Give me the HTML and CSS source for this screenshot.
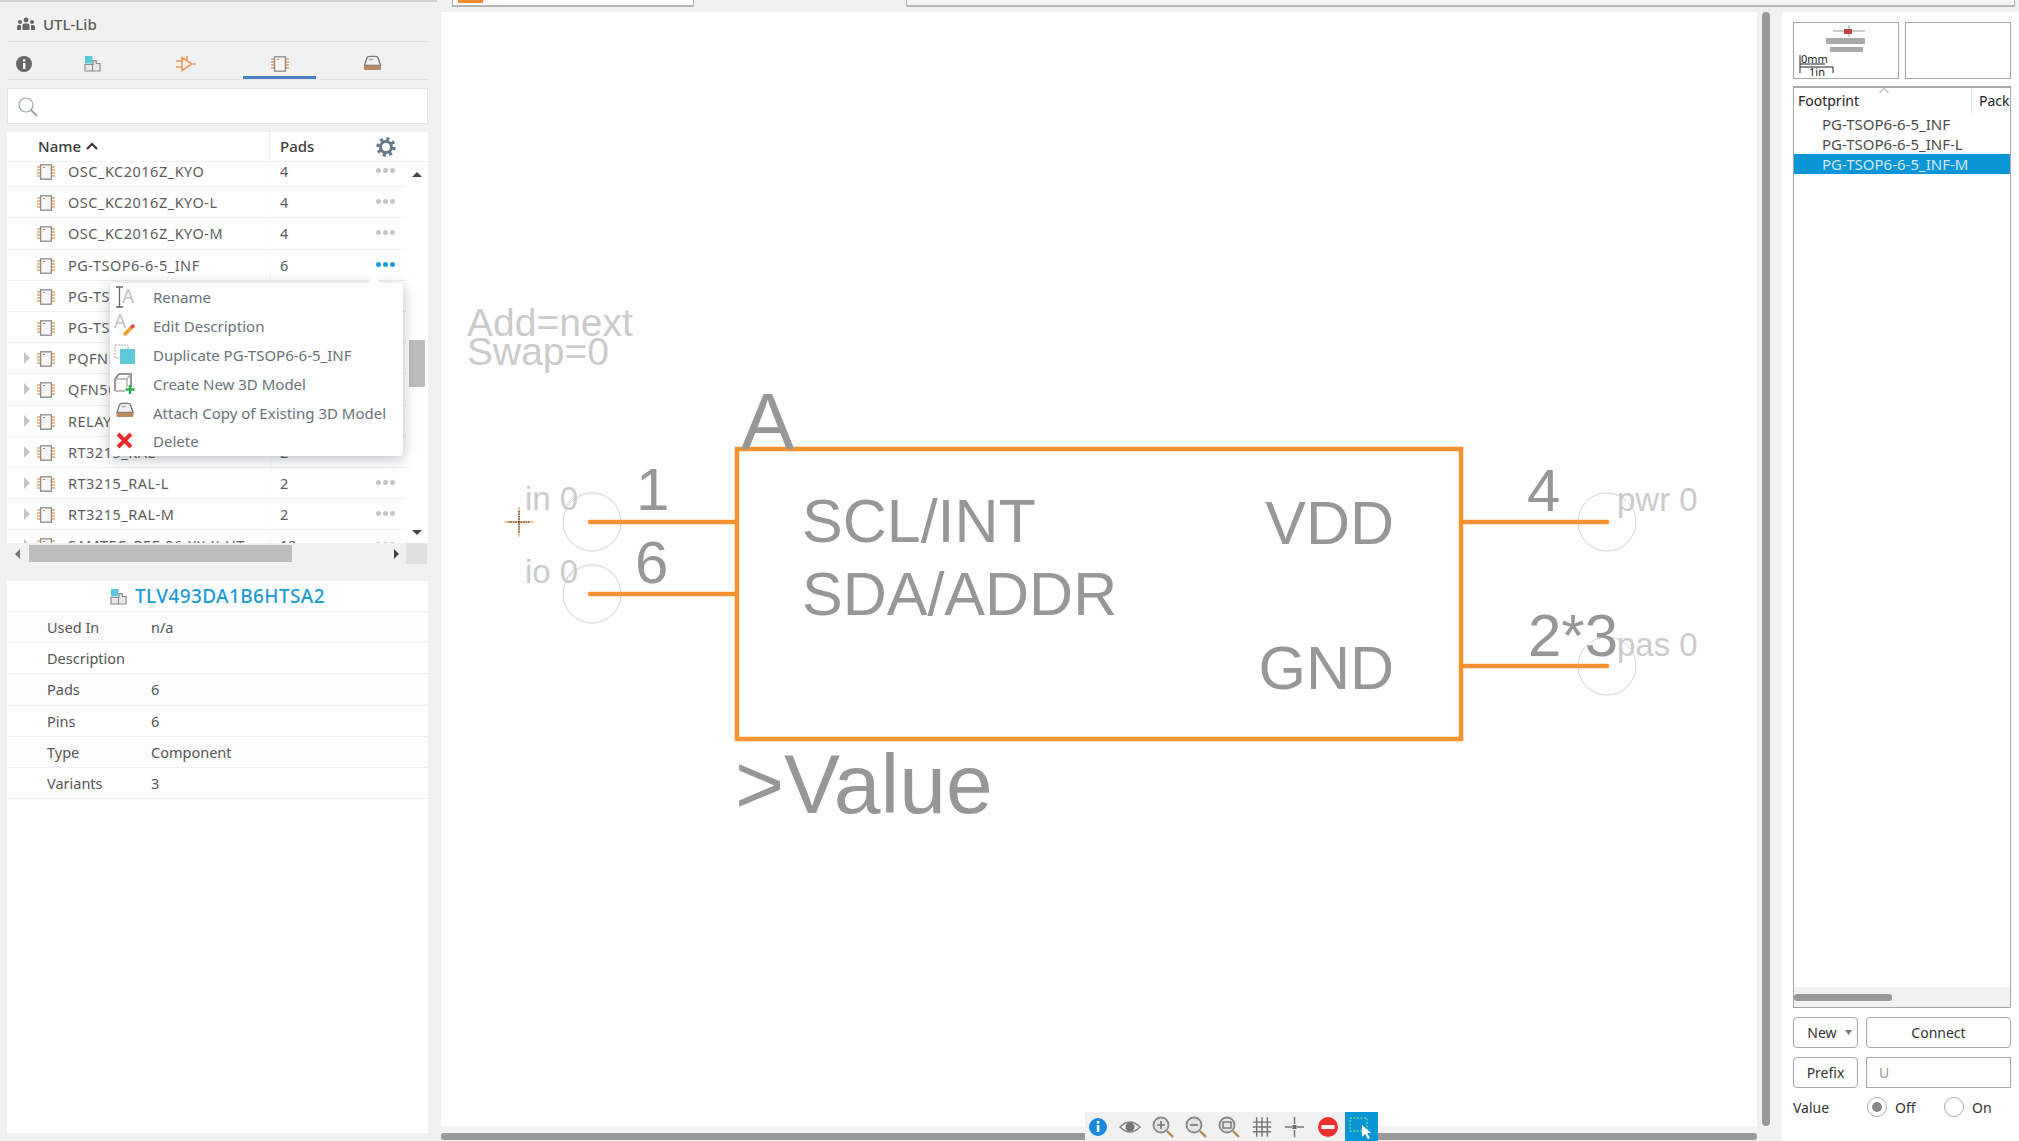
FILE: index.html
```html
<!DOCTYPE html>
<html lang="en">
<head>
    <meta charset="UTF-8">
    <title>UTL-Lib</title>
    <link rel="stylesheet" href="styles.css">
</head>
<body>

<svg class="defs" width="0" height="0">
    <symbol id="chip" viewBox="0 0 18 16">
        <path d="M0 3h4M0 6h4M0 9h4M0 12h4M14 3h4M14 6h4M14 9h4M14 12h4" stroke="#f0a060" stroke-width="1.4"/>
        <rect x="3.6" y="0.8" width="10.8" height="14.4" fill="#f6f6f6" stroke="#8c8c8c" stroke-width="1.3"/>
        <path d="M6 3.5h2" stroke="#8c8c8c" stroke-width="1.2"/>
    </symbol>
    <symbol id="comp" viewBox="0 0 18 18">
        <rect x="1" y="1" width="8" height="8" fill="#5cc8d8"/>
        <path d="M9.5 6H13l0 3h4v8H1V10h8.500z" fill="#e8e8e8" stroke="#8c8c8c" stroke-width="1.2"/>
        <path d="M9 10v7" stroke="#8c8c8c" stroke-width="1.2"/>
    </symbol>
    <symbol id="pack" viewBox="0 0 20 18">
        <path d="M1.500 11L4 3.500Q4.500 1.500 7 1.500H13Q15.500 1.500 16 3.500L18.500 11z" fill="#f2f2f2" stroke="#777" stroke-width="1.400"/>
        <rect x="6" y="4" width="5" height="1.500" fill="#aaa"/>
        <rect x="1" y="11" width="18" height="5" rx="1.500" fill="#b98a62"/>
    </symbol>
</svg>

<div class="app">

    <aside class="left-panel">
        <div class="lib-title">
            <svg class="lib-icon" width="18" height="14" viewBox="0 0 18 14">
                <circle cx="9" cy="3" r="2.400" fill="#666"/><circle cx="3" cy="5" r="2" fill="#666"/><circle cx="15" cy="5" r="2" fill="#666"/>
                <path d="M5.500 13V8.500Q5.500 6.500 7.500 6.500h3Q12.500 6.500 12.500 8.500V13zM0 13V9.500Q0 8 2 8h2V13zM18 13V9.500Q18 8 16 8h-2V13z" fill="#666"/>
            </svg>
            <span>UTL-Lib</span>
        </div>

        <div class="lib-tabs">
            <div class="lib-tab">
                <svg width="16" height="16" viewBox="0 0 16 16"><circle cx="8" cy="8" r="8" fill="#666"/><rect x="7" y="7" width="2.400" height="6" fill="#fff"/><rect x="7" y="3.200" width="2.400" height="2.400" fill="#fff"/></svg>
            </div>
            <div class="lib-tab"><svg width="17" height="17"><use href="#comp"/></svg></div>
            <div class="lib-tab sym-tab">
                <svg width="20" height="18" viewBox="0 0 20 18"><path d="M6 2.500V15.500L16 9zM0 6h6M0 12h6M16 9h4M11 1v5" fill="none" stroke="#ec9a58" stroke-width="1.500"/></svg>
            </div>
            <div class="lib-tab active"><svg width="18" height="16"><use href="#chip"/></svg></div>
            <div class="lib-tab"><svg width="19" height="17"><use href="#pack"/></svg></div>
        </div>

        <div class="search-box">
            <svg width="22" height="22" viewBox="0 0 22 22"><circle cx="9" cy="9" r="7" fill="none" stroke="#9aa4ac" stroke-width="1.200"/><path d="M14 14l6 6" stroke="#9aa4ac" stroke-width="1.800"/></svg>
        </div>

        <div class="pkg-table">
            <div class="pkg-head">
                <div class="head-name">Name <svg width="12" height="8" viewBox="0 0 12 8"><path d="M1 7l5-5 5 5" fill="none" stroke="#333" stroke-width="2"/></svg></div>
                <div class="head-pads">Pads</div>
                <svg class="gear" width="20" height="20" viewBox="0 0 20 20">
                    <circle cx="10" cy="10" r="5.500" fill="none" stroke="#66798a" stroke-width="3"/>
                    <circle cx="10" cy="10" r="8" fill="none" stroke="#66798a" stroke-width="3.500" stroke-dasharray="3.100 3.180"/>
                </svg>
            </div>
            <div class="pkg-body">
                <div class="pkg-rows">
                    <div class="pkg-row"><i></i><svg width="18" height="16"><use href="#chip"/></svg><span class="name">OSC_KC2016Z_KYO</span><span class="pads">4</span><span class="dots"><b></b><b></b><b></b></span></div>
                    <div class="pkg-row"><i></i><svg width="18" height="16"><use href="#chip"/></svg><span class="name">OSC_KC2016Z_KYO-L</span><span class="pads">4</span><span class="dots"><b></b><b></b><b></b></span></div>
                    <div class="pkg-row"><i></i><svg width="18" height="16"><use href="#chip"/></svg><span class="name">OSC_KC2016Z_KYO-M</span><span class="pads">4</span><span class="dots"><b></b><b></b><b></b></span></div>
                    <div class="pkg-row"><i></i><svg width="18" height="16"><use href="#chip"/></svg><span class="name">PG-TSOP6-6-5_INF</span><span class="pads">6</span><span class="dots on"><b></b><b></b><b></b></span></div>
                    <div class="pkg-row"><i></i><svg width="18" height="16"><use href="#chip"/></svg><span class="name">PG-TSOP6-6-5_INF-L</span><span class="pads">6</span><span class="dots"><b></b><b></b><b></b></span></div>
                    <div class="pkg-row"><i></i><svg width="18" height="16"><use href="#chip"/></svg><span class="name">PG-TSOP6-6-5_INF-M</span><span class="pads">6</span><span class="dots"><b></b><b></b><b></b></span></div>
                    <div class="pkg-row"><i class="arrow"></i><svg width="18" height="16"><use href="#chip"/></svg><span class="name">PQFN5X6</span><span class="pads">8</span><span class="dots"><b></b><b></b><b></b></span></div>
                    <div class="pkg-row"><i class="arrow"></i><svg width="18" height="16"><use href="#chip"/></svg><span class="name">QFN50</span><span class="pads">50</span><span class="dots"><b></b><b></b><b></b></span></div>
                    <div class="pkg-row"><i class="arrow"></i><svg width="18" height="16"><use href="#chip"/></svg><span class="name">RELAY</span><span class="pads">5</span><span class="dots"><b></b><b></b><b></b></span></div>
                    <div class="pkg-row"><i class="arrow"></i><svg width="18" height="16"><use href="#chip"/></svg><span class="name">RT3215_RAL</span><span class="pads">2</span><span class="dots"><b></b><b></b><b></b></span></div>
                    <div class="pkg-row"><i class="arrow"></i><svg width="18" height="16"><use href="#chip"/></svg><span class="name">RT3215_RAL-L</span><span class="pads">2</span><span class="dots"><b></b><b></b><b></b></span></div>
                    <div class="pkg-row"><i class="arrow"></i><svg width="18" height="16"><use href="#chip"/></svg><span class="name">RT3215_RAL-M</span><span class="pads">2</span><span class="dots"><b></b><b></b><b></b></span></div>
                    <div class="pkg-row"><i class="arrow"></i><svg width="18" height="16"><use href="#chip"/></svg><span class="name">SAMTEC_REF-06-XX-X-HT</span><span class="pads">12</span><span class="dots"><b></b><b></b><b></b></span></div>
                </div>
                <div class="list-scroll">
                    <span class="tri-up"></span>
                    <span class="list-thumb"></span>
                    <span class="tri-down"></span>
                </div>
            </div>
            <div class="list-hscroll">
                <span class="tri-left"></span>
                <span class="hthumb"></span>
                <span class="tri-right"></span>
                <span class="corner"></span>
            </div>
        </div>

        <div class="details">
            <div class="details-title"><svg width="17" height="17"><use href="#comp"/></svg><span>TLV493DA1B6HTSA2</span></div>
            <div class="detail-row"><span class="key">Used In</span><span>n/a</span></div>
            <div class="detail-row"><span class="key">Description</span><span></span></div>
            <div class="detail-row"><span class="key">Pads</span><span>6</span></div>
            <div class="detail-row"><span class="key">Pins</span><span>6</span></div>
            <div class="detail-row"><span class="key">Type</span><span>Component</span></div>
            <div class="detail-row"><span class="key">Variants</span><span>3</span></div>
        </div>

        <div class="menu">
            <div class="menu-item">
                <svg width="22" height="22" viewBox="0 0 22 22"><text x="8" y="17" class="menu-a">A</text><path d="M2 1h7M2 21h7M5.500 1v20" stroke="#666" stroke-width="1.300" fill="none"/></svg>
                <span>Rename</span>
            </div>
            <div class="menu-item">
                <svg width="22" height="22" viewBox="0 0 22 22"><text x="0" y="13" class="menu-a">A</text><path d="M10 20l7-7" stroke="#f0a030" stroke-width="3.500"/><path d="M17 13l3-3" stroke="#e05040" stroke-width="3.500"/></svg>
                <span>Edit Description</span>
            </div>
            <div class="menu-item">
                <svg width="22" height="22" viewBox="0 0 22 22"><rect x="1" y="1" width="13" height="13" fill="none" stroke="#aaa" stroke-dasharray="2 1"/><rect x="6" y="5" width="15" height="15" fill="#5cc8d8"/></svg>
                <span>Duplicate PG-TSOP6-6-5_INF</span>
            </div>
            <div class="menu-item">
                <svg width="22" height="22" viewBox="0 0 22 22"><path d="M1 18V6L5 1H17V14" fill="none" stroke="#777" stroke-width="1.500"/><path d="M1 18H11M1 6H13V14M13 6l4-5" fill="none" stroke="#aaa" stroke-width="1.300"/><path d="M16 12v9M11.500 16.500h9" stroke="#27b04a" stroke-width="2.400"/></svg>
                <span>Create New 3D Model</span>
            </div>
            <div class="menu-item">
                <svg class="lift" width="19" height="17"><use href="#pack"/></svg>
                <span>Attach Copy of Existing 3D Model</span>
            </div>
            <div class="menu-item">
                <svg width="22" height="22" viewBox="0 0 22 22"><path d="M4 4l13 13M17 4L4 17" stroke="#ee2b2b" stroke-width="4"/></svg>
                <span>Delete</span>
            </div>
        </div>
    </aside>

    <div class="workspace">
        <div class="doc-tabs">
            <div class="doc-tab first"><span class="doc-swatch"></span></div>
            <div class="doc-tab second"></div>
        </div>

        <div class="work-row">
            <div class="canvas-col">
                <svg class="schematic" viewBox="441 12 1316 1114">
                    <text x="467" y="336" class="hint">Add=next</text>
                    <text x="467" y="365" class="hint">Swap=0</text>

                    <circle cx="592" cy="522" r="29" class="pin-circle"/>
                    <circle cx="592" cy="594" r="29" class="pin-circle"/>
                    <circle cx="1607" cy="522" r="29" class="pin-circle"/>
                    <circle cx="1607" cy="666" r="29" class="pin-circle"/>

                    <path d="M590 522H735M590 594H735M1461 522H1607M1461 666H1607" class="pin-line"/>
                    <rect x="737" y="449" width="724" height="290" class="sym-box"/>

                    <text x="741" y="449" class="big">A</text>
                    <text x="735" y="813" class="big value">&gt;Value</text>

                    <text x="636" y="510" class="num">1</text>
                    <text x="635" y="583" class="num">6</text>
                    <text x="1527" y="511" class="num">4</text>
                    <text x="1528" y="656" class="num">2*3</text>

                    <text x="802" y="542" class="pin-name">SCL/INT</text>
                    <text x="802" y="615" class="pin-name">SDA/ADDR</text>
                    <text x="1394" y="544" class="pin-name end">VDD</text>
                    <text x="1394" y="689" class="pin-name end">GND</text>

                    <text x="525" y="510" class="pin-type">in 0</text>
                    <text x="525" y="583" class="pin-type">io 0</text>
                    <text x="1617" y="511" class="pin-type">pwr 0</text>
                    <text x="1617" y="656" class="pin-type">pas 0</text>
                    <path d="M564 508l11-13M564 581l11-13" class="zero-slash"/>

                    <path d="M504 522H534M519 507V537" class="cross-orange"/>
                    <path d="M508 522H530M519 511V533" class="cross-black"/>
                </svg>

                <div class="canvas-hscroll"><span class="canvas-hthumb"></span></div>

                <div class="view-bar">
                    <svg width="29" height="29" viewBox="3 0 29 29"><circle cx="16" cy="15" r="9" fill="#1a88dd"/><rect x="14.800" y="13" width="2.600" height="7" fill="#fff"/><rect x="14.800" y="9" width="2.600" height="2.600" fill="#fff"/></svg>
                    <svg width="33" height="29" viewBox="0 0 33 29"><path d="M6 15Q16 5 26 15Q16 25 6 15z" fill="none" stroke="#888" stroke-width="1.600"/><circle cx="16" cy="15" r="4.500" fill="#777"/></svg>
                    <svg width="33" height="29" viewBox="0 0 33 29"><circle cx="14" cy="13" r="7.500" fill="#e4e4e4" stroke="#888" stroke-width="1.800"/><path d="M10 13h8M14 9v8" stroke="#777" stroke-width="1.600"/><path d="M20 19l6 6" stroke="#b08a50" stroke-width="2.400"/></svg>
                    <svg width="33" height="29" viewBox="0 0 33 29"><circle cx="14" cy="13" r="7.500" fill="#e4e4e4" stroke="#888" stroke-width="1.800"/><path d="M10 13h8" stroke="#777" stroke-width="1.600"/><path d="M20 19l6 6" stroke="#b08a50" stroke-width="2.400"/></svg>
                    <svg width="33" height="29" viewBox="0 0 33 29"><circle cx="14" cy="13" r="7.500" fill="#e4e4e4" stroke="#888" stroke-width="1.800"/><rect x="10" y="10" width="8" height="6" fill="none" stroke="#777" stroke-width="1.400"/><path d="M20 19l6 6" stroke="#b08a50" stroke-width="2.400"/></svg>
                    <svg width="32" height="29" viewBox="0 0 33 29"><path d="M7 10H26M7 15H26M7 20H26M11 5V25M16.500 5V25M22 5V25" stroke="#777" stroke-width="1.500"/></svg>
                    <svg width="33" height="29" viewBox="0 0 33 29"><path d="M7 15H14M19 15H26M16.500 5V12M16.500 18V25" stroke="#777" stroke-width="1.500"/><rect x="14.500" y="13" width="4" height="4" fill="#666"/></svg>
                    <svg width="34" height="29" viewBox="0 0 33 29"><circle cx="16.500" cy="15" r="10" fill="#ee3030"/><rect x="10" y="13" width="13" height="4" fill="#fff"/></svg>
                    <div class="select-tool">
                        <svg width="33" height="29" viewBox="0 0 33 29"><rect x="5" y="6" width="17" height="13" fill="none" stroke="#6fd08a" stroke-width="1.400" stroke-dasharray="2 1.500"/><path d="M17 13V25L20 22L23 27L25 26L22 21H26z" fill="#fff"/></svg>
                    </div>
                </div>
            </div>

            <div class="canvas-vscroll"><span class="canvas-vthumb"></span></div>

            <aside class="right-panel">
                <div class="previews">
                    <div class="preview">
                        <svg width="104" height="55" viewBox="0 0 104 55">
                            <path d="M39 8H71M55 2V14" stroke="#999" stroke-width="1"/>
                            <rect x="50" y="6" width="8" height="5" fill="#b44"/>
                            <rect x="32" y="15" width="39" height="6" fill="#aaa"/>
                            <rect x="36" y="24" width="33" height="5" fill="#aaa"/>
                            <path d="M6 32V50M6 44H39M39 44V50M6 41H31" stroke="#222" stroke-width="1" fill="none"/>
                            <text x="7" y="40" class="scale">0mm</text>
                            <text x="15" y="53" class="scale">1in</text>
                        </svg>
                    </div>
                    <div class="preview"></div>
                </div>

                <div class="variants">
                    <div class="variant-head">
                        <span class="fp-col">Footprint</span>
                        <span class="pack-col">Pack</span>
                        <svg class="sort-caret" width="10" height="5" viewBox="0 0 10 5"><path d="M0.500 5L5 0.500 9.500 5" fill="none" stroke="#888"/></svg>
                    </div>
                    <div class="variant-list">
                        <div class="variant">PG-TSOP6-6-5_INF</div>
                        <div class="variant">PG-TSOP6-6-5_INF-L</div>
                        <div class="variant sel">PG-TSOP6-6-5_INF-M</div>
                    </div>
                    <div class="variant-scroll"><span class="variant-thumb"></span></div>
                </div>

                <div class="btn-row">
                    <button class="btn new-btn">New <svg width="7" height="5" viewBox="0 0 7 5"><path d="M0 0h7L3.500 5z" fill="#777"/></svg></button>
                    <button class="btn wide">Connect</button>
                </div>
                <div class="btn-row">
                    <button class="btn">Prefix</button>
                    <div class="prefix-field">U</div>
                </div>
                <div class="value-row">
                    <span class="value-label">Value</span>
                    <span class="radio checked"></span><span class="radio-text off">Off</span>
                    <span class="radio"></span><span class="radio-text">On</span>
                </div>
            </aside>
        </div>
    </div>
</div>

</body>
</html>
```

FILE: styles.css
```css
* {
    box-sizing: border-box;
}
body {
    margin: 0;
    font-family: "Noto Sans", "Open Sans", sans-serif;
    font-size: 14px;
    color: #555;
    background-color: #f1f1f1;
    overflow: hidden;
}
.defs {
    position: absolute;
}
svg {
    display: block;
    flex: none;
}
.app {
    display: flex;
    width: 2019px;
    height: 1141px;
}

/* left library panel */
.left-panel {
    position: relative;
    width: 441px;
    padding: 0 13px 8px 7px;
    display: flex;
    flex-direction: column;
}
.left-panel::before {
    content: "";
    height: 2px;
    margin: 0 -9px 0 -7px;
    background-color: #d0d0d0;
}
.lib-title {
    height: 40px;
    display: flex;
    align-items: center;
    gap: 8px;
    padding: 5px 0 0 10px;
    border-bottom: 1px solid #e0e0e0;
    font-size: 15px;
    font-weight: 500;
    color: #5b5b5b;
}
.lib-tabs {
    height: 38px;
    display: grid;
    grid-template-columns: 34px 102px 100px 73px 112px;
    border-bottom: 1px solid #e2e2e2;
}
.lib-tab {
    display: flex;
    align-items: center;
    justify-content: center;
    padding-top: 9px;
    padding-bottom: 3px;
}
.lib-tab.sym-tab {
    padding-right: 14px;
}
.lib-tab.active {
    padding-bottom: 0;
    border-bottom: 3px solid #4a80c4;
}
.search-box {
    height: 36px;
    margin-top: 8px;
    padding: 7px 0 0 9px;
    background-color: #fff;
    border: 1px solid #e4e4e4;
}
.pkg-table {
    margin-top: 8px;
    background-color: #fff;
}
.pkg-head {
    height: 30px;
    display: flex;
    align-items: center;
    position: relative;
    background-color: #fff;
    border-bottom: 1px solid #eef0f2;
    font-size: 15px;
    font-weight: 500;
    color: #3c3c3c;
}
.head-name {
    width: 263px;
    height: 100%;
    display: flex;
    align-items: center;
    gap: 5px;
    padding: 0 0 2px 31px;
    border-right: 1px solid #eee;
}
.head-pads {
    padding: 0 0 2px 10px;
    width: 86px;
}
.gear {
    margin-left: 20px;
}
.pkg-body {
    height: 381px;
    display: flex;
    overflow: hidden;
}
.pkg-rows {
    width: 399px;
    margin-top: -6px;
}
.pkg-row {
    height: 31.2px;
    display: flex;
    align-items: center;
    position: relative;
    border-bottom: 1px solid #eef0f2;
    color: #5c5c5c;
    background: linear-gradient(90deg, #fff 263px, #ececec 263px, #fff 264px);
}
.pkg-row svg {
    margin-top: 2px;
}
.pkg-row i {
    width: 30px;
    flex: none;
    display: block;
}
.pkg-row i.arrow::before {
    content: "";
    display: block;
    margin-left: 17px;
    width: 0;
    height: 0;
    border-left: 6px solid #c4c4c4;
    border-top: 6px solid transparent;
    border-bottom: 6px solid transparent;
}
.name {
    width: 212px;
    margin-left: 13px;
    flex: none;
    font-size: 14.5px;
    letter-spacing: 0.5px;
    white-space: nowrap;
}
.pads {
    width: 96px;
    flex: none;
    font-size: 14.5px;
}
.dots {
    display: flex;
    gap: 2px;
}
.dots b {
    width: 5px;
    height: 5px;
    margin-top: -1px;
    border-radius: 50%;
    background-color: #c4c4c4;
}
.dots.on b {
    background-color: #1e9be0;
}
.list-scroll {
    position: relative;
    flex: 1;
    background-color: #fff;
}
.tri-up, .tri-down, .tri-left, .tri-right {
    position: absolute;
    width: 0;
    height: 0;
}
.tri-up {
    top: 10px;
    left: 6px;
    border-bottom: 5px solid #444;
    border-left: 5px solid transparent;
    border-right: 5px solid transparent;
}
.tri-down {
    bottom: 8px;
    left: 6px;
    border-top: 5px solid #444;
    border-left: 5px solid transparent;
    border-right: 5px solid transparent;
}
.list-thumb {
    position: absolute;
    top: 178px;
    left: 3px;
    width: 16px;
    height: 47px;
    background-color: #bdbdbd;
}
.list-hscroll {
    height: 21px;
    position: relative;
    background-color: #f1f1f1;
}
.hthumb {
    position: absolute;
    left: 22px;
    top: 2px;
    width: 263px;
    height: 17px;
    background-color: #bdbdbd;
}
.tri-left {
    left: 8px;
    top: 6px;
    border-right: 5px solid #777;
    border-top: 5px solid transparent;
    border-bottom: 5px solid transparent;
}
.tri-right {
    left: 387px;
    top: 6px;
    border-left: 5px solid #444;
    border-top: 5px solid transparent;
    border-bottom: 5px solid transparent;
}
.corner {
    position: absolute;
    left: 399px;
    top: 0;
    width: 21px;
    height: 21px;
    background-color: #e0e0e0;
}
.details {
    flex: 1;
    margin-top: 17px;
    background-color: #fff;
    font-size: 14.5px;
}
.details-title {
    height: 31px;
    display: flex;
    align-items: center;
    justify-content: center;
    gap: 8px;
    border-bottom: 1px solid #eef0f2;
    font-size: 19px;
    letter-spacing: 0.4px;
    font-weight: 500;
    color: #1b9ad6;
}
.detail-row {
    height: 31.2px;
    display: flex;
    align-items: center;
    padding-left: 40px;
    border-bottom: 1px solid #eef0f2;
    background-color: #fcfcfc;
}
.detail-row:nth-child(odd) {
    background-color: #fff;
}
.key {
    width: 104px;
    flex: none;
}

/* context menu over the package list */
.menu {
    position: absolute;
    left: 110px;
    top: 283px;
    width: 293px;
    height: 173px;
    padding: 0 0 0 4px;
    background-color: #fff;
    border-radius: 4px;
    box-shadow: 0 3px 14px rgba(60, 70, 80, 0.35);
    font-size: 15px;
    color: #68727a;
}
.menu::before {
    content: "";
    position: absolute;
    left: 259px;
    top: -5px;
    width: 10px;
    height: 10px;
    background-color: #fff;
    transform: rotate(45deg);
}
.menu-item {
    height: 28.8px;
    display: flex;
    align-items: center;
    position: relative;
}
.menu-item svg {
    width: 22px;
    overflow: visible;
}
.menu-item svg.lift {
    margin-top: -4px;
}
.menu-item span {
    margin-left: 17px;
    white-space: nowrap;
}
.menu-a {
    font-family: "Noto Sans", sans-serif;
    font-size: 19px;
    fill: #c0c0c0;
}

/* top strip, canvas and scrollbars */
.workspace {
    flex: 1;
    display: flex;
    flex-direction: column;
    min-width: 0;
}
.doc-tabs {
    height: 12px;
    flex: none;
    display: flex;
    align-items: flex-start;
    background-color: #f1f1f1;
}
.doc-tab {
    height: 7px;
    background-color: #fff;
    border: 1px solid #b5b5b5;
    border-top: none;
    border-bottom-width: 2px;
}
.doc-tab.first {
    width: 242px;
    margin-left: 11px;
    padding-left: 5px;
}
.doc-tab.second {
    flex: 1;
    margin: 0 4px 0 212px;
    background-color: #f4f4f4;
}
.doc-swatch {
    display: block;
    width: 25px;
    height: 3px;
    background-color: #f58a2e;
}
.work-row {
    flex: 1;
    display: flex;
    min-height: 0;
}
.canvas-col {
    position: relative;
    width: 1316px;
    display: flex;
    flex-direction: column;
    background-color: #fff;
}
.schematic {
    width: 1316px;
    height: 1114px;
    font-family: "Liberation Sans", Arial, sans-serif;
}
.hint {
    font-size: 39px;
    fill: #cbcbcb;
}
.pin-circle {
    fill: none;
    stroke: #d2d2d2;
    stroke-width: 1;
}
.pin-line {
    fill: none;
    stroke: #f79231;
    stroke-width: 4.5;
    stroke-linecap: round;
}
.sym-box {
    fill: none;
    stroke: #f79231;
    stroke-width: 4.5;
}
.big {
    font-size: 80px;
    fill: #979797;
}
.big.value {
    font-size: 84px;
}
.num {
    font-size: 60px;
    fill: #979797;
}
.pin-name {
    font-size: 61px;
    fill: #979797;
}
.pin-name.end {
    text-anchor: end;
}
.pin-type {
    font-size: 33px;
    fill: #cbcbcb;
}
.zero-slash {
    stroke: #cbcbcb;
    stroke-width: 1;
}
.cross-orange {
    stroke: #f79231;
    stroke-width: 1;
}
.cross-black {
    stroke: #222;
    stroke-width: 1;
    stroke-dasharray: 1.500 1;
}
.canvas-hscroll {
    flex: 1;
    padding-top: 7px;
    background-color: #f4f4f4;
}
.canvas-hthumb {
    display: block;
    height: 7px;
    background-color: #999;
    border-radius: 3px;
}
.view-bar {
    position: absolute;
    left: 644px;
    bottom: 0;
    width: 293px;
    height: 29px;
    display: flex;
    background-color: #f1f1f1;
}
.select-tool {
    background-color: #0a96d6;
}
.canvas-vscroll {
    width: 25px;
    flex: none;
    padding: 0 12px 15px 5px;
    background-color: #f1f1f1;
}
.canvas-vthumb {
    display: block;
    height: 100%;
    background-color: #999;
    border-radius: 4px;
}

/* right variants panel */
.right-panel {
    flex: 1;
    padding: 10px 8px 0 11px;
    background-color: #fff;
    color: #333;
    font-size: 14px;
}
.previews {
    display: flex;
    gap: 6px;
}
.preview {
    width: 106px;
    height: 57px;
    border: 1px solid #a6a6a6;
}
.scale {
    font-family: "Noto Sans", sans-serif;
    font-size: 11px;
    fill: #222;
}
.variants {
    position: relative;
    height: 922px;
    margin-top: 7px;
    display: flex;
    flex-direction: column;
    border: 1px solid #a6a6a6;
    border-top-width: 2px;
}
.variant-head {
    height: 26px;
    flex: none;
    display: flex;
    align-items: center;
    overflow: hidden;
    padding-left: 4px;
    color: #222;
}
.fp-col {
    width: 174px;
    flex: none;
    height: 100%;
    line-height: 26px;
    border-right: 1px solid #ececec;
}
.pack-col {
    padding-left: 7px;
    line-height: 26px;
    height: 100%;
}
.sort-caret {
    position: absolute;
    left: 85px;
    top: 0;
}
.variant-list {
    flex: 1;
}
.variant {
    height: 20px;
    padding-left: 28px;
    line-height: 20px;
    font-size: 15px;
    color: #4c4c4c;
    white-space: nowrap;
}
.variant.sel {
    background-color: #0a96d6;
    color: #cfe9f6;
}
.variant-scroll {
    height: 20px;
    flex: none;
    padding-top: 7px;
    background-color: #f1f1f1;
}
.variant-thumb {
    display: block;
    width: 98px;
    height: 7px;
    background-color: #999;
    border-radius: 3px;
}
.btn-row {
    display: flex;
    gap: 8px;
    margin-top: 9px;
    height: 31px;
}
.btn {
    width: 65px;
    height: 31px;
    padding: 0;
    font: inherit;
    color: #333;
    background-color: #fff;
    border: 1px solid #a6a6a6;
    border-radius: 4px;
    display: flex;
    align-items: center;
    justify-content: center;
    gap: 8px;
}
.new-btn {
    padding-left: 8px;
}
.btn.wide {
    flex: 1;
}
.prefix-field {
    flex: 1;
    padding-left: 12px;
    line-height: 29px;
    color: #999;
    border: 1px solid #a6a6a6;
}
.value-row {
    display: flex;
    align-items: center;
    margin-top: 9px;
    height: 20px;
}
.value-label {
    width: 74px;
}
.radio {
    width: 20px;
    height: 20px;
    border: 1px solid #aaa;
    border-radius: 50%;
    display: flex;
    align-items: center;
    justify-content: center;
}
.radio.checked::before {
    content: "";
    width: 10px;
    height: 10px;
    border-radius: 50%;
    background-color: #888;
}
.radio-text {
    margin-left: 8px;
}
.radio-text.off {
    width: 49px;
}
```
